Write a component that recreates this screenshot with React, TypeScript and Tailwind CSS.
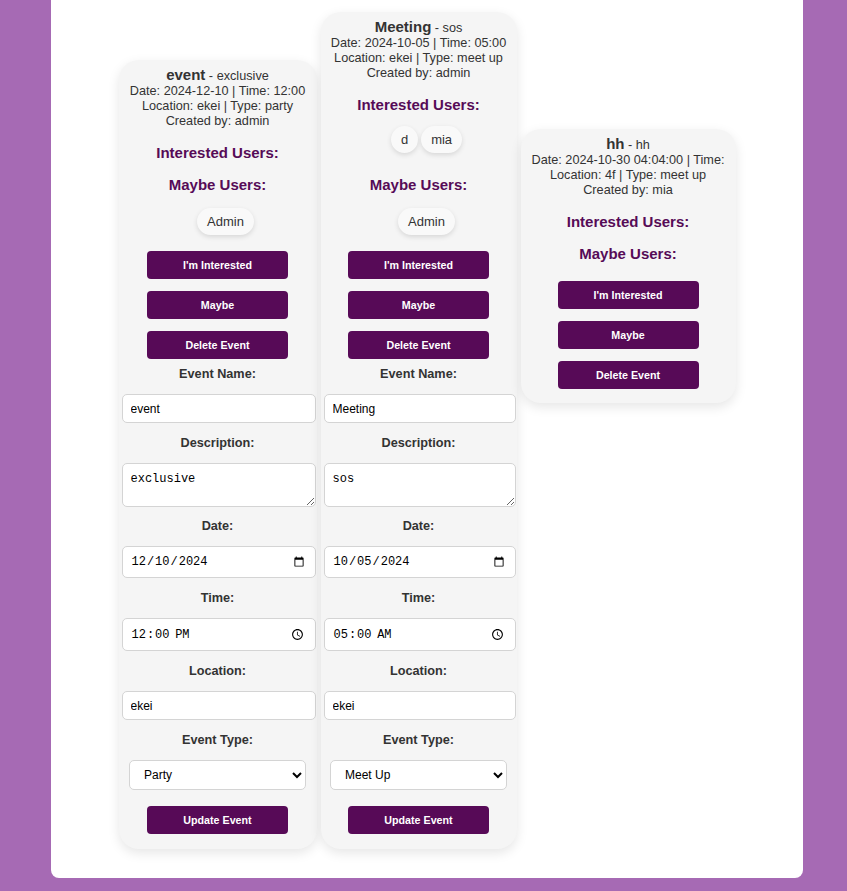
type EventItem = {
  name: string;
  description: string;
  dateLine: string;
  location: string;
  type: string;
  createdBy: string;
  interested: string[];
  maybe: string[];
  form?: {
    date: string;
    time: string;
    typeLabel: string;
  };
};

const events: EventItem[] = [
  {
    name: "event",
    description: "exclusive",
    dateLine: "Date: 2024-12-10 | Time: 12:00",
    location: "ekei",
    type: "party",
    createdBy: "admin",
    interested: [],
    maybe: ["Admin"],
    form: { date: "2024-12-10", time: "12:00", typeLabel: "Party" },
  },
  {
    name: "Meeting",
    description: "sos",
    dateLine: "Date: 2024-10-05 | Time: 05:00",
    location: "ekei",
    type: "meet up",
    createdBy: "admin",
    interested: ["d", "mia"],
    maybe: ["Admin"],
    form: { date: "2024-10-05", time: "05:00", typeLabel: "Meet Up" },
  },
  {
    name: "hh",
    description: "hh",
    dateLine: "Date: 2024-10-30 04:04:00 | Time:",
    location: "4f",
    type: "meet up",
    createdBy: "mia",
    interested: [],
    maybe: [],
  },
];

function Chip({ label }: { label: string }) {
  return (
    <li className="flex h-[27px] items-center rounded-full bg-[#f9f9f9] px-[10px] text-[13px] text-[#333] shadow-[0_2px_5px_rgba(0,0,0,0.12)]">
      {label}
    </li>
  );
}

function ActionButton({ children, className }: { children: string; className?: string }) {
  return (
    <button
      type="button"
      className={`h-[28px] w-[141px] rounded-[4px] bg-[#570a57] text-[10.7px] font-bold text-white ${className ?? ""}`}
    >
      {children}
    </button>
  );
}

function FieldLabel({ children }: { children: string }) {
  return (
    <label className="mt-[12px] mb-[12px] text-[12.7px] leading-[16px] font-bold text-[#333]">
      {children}
    </label>
  );
}

const inputClass =
  "self-stretch ml-[3px] mr-[1px] rounded-[5px] border border-[#d4d4d4] bg-white px-[8px] text-[12px] text-black outline-none";

function EventCard({ ev, className }: { ev: EventItem; className: string }) {
  return (
    <div
      className={`flex flex-col items-center rounded-[20px] bg-[#f5f5f5] px-[6px] pt-[7px] text-center shadow-[0_4px_12px_rgba(0,0,0,0.1)] ${className}`}
    >
      <div className="text-[12.7px] leading-[15px] text-[#333]">
        <div className="leading-[16px]">
          <span className="text-[15px] font-bold">{ev.name}</span> - {ev.description}
        </div>
        <div className="whitespace-nowrap">{ev.dateLine}</div>
        <div className="whitespace-nowrap">
          Location: {ev.location} | Type: {ev.type}
        </div>
        <div>Created by: {ev.createdBy}</div>
      </div>

      <h3 className="mt-[15px] text-[15px] leading-[18px] font-bold text-[#560b57]">
        Interested Users:
      </h3>
      {ev.interested.length > 0 && (
        <ul className="mt-[12px] mb-[9px] flex gap-[3px] pl-[16px]">
          {ev.interested.map((u) => (
            <Chip key={u} label={u} />
          ))}
        </ul>
      )}

      <h3 className="mt-[14px] text-[15px] leading-[18px] font-bold text-[#560b57]">
        Maybe Users:
      </h3>
      {ev.maybe.length > 0 && (
        <ul className="mt-[14px] flex gap-[3px] pl-[16px]">
          {ev.maybe.map((u) => (
            <Chip key={u} label={u} />
          ))}
        </ul>
      )}

      <div className={`flex flex-col items-center gap-[12px] ${ev.maybe.length > 0 ? "mt-[16px]" : "mt-[18px]"}`}>
        <ActionButton>I'm Interested</ActionButton>
        <ActionButton>Maybe</ActionButton>
        <ActionButton>Delete Event</ActionButton>
      </div>

      {ev.form && (
        <form className="flex flex-col items-center self-stretch -mx-[6px]">
          <label className="mt-[7px] mb-[12px] text-[12.7px] leading-[16px] font-bold text-[#333]">
            Event Name:
          </label>
          <input type="text" defaultValue={ev.name} className={`${inputClass} h-[29px]`} />

          <FieldLabel>Description:</FieldLabel>
          <textarea
            defaultValue={ev.description}
            className={`${inputClass} h-[44px] pt-[6px] font-['Liberation_Mono',monospace] text-[12px]`}
          />

          <label className="mt-[11px] mb-[12px] text-[12.7px] leading-[16px] font-bold text-[#333]">
            Date:
          </label>
          <input
            type="date"
            defaultValue={ev.form.date}
            className={`${inputClass} h-[32px] font-['Liberation_Mono',monospace]`}
          />

          <FieldLabel>Time:</FieldLabel>
          <input
            type="time"
            defaultValue={ev.form.time}
            className={`${inputClass} h-[33px] font-['Liberation_Mono',monospace]`}
          />

          <FieldLabel>Location:</FieldLabel>
          <input type="text" defaultValue={ev.location} className={`${inputClass} h-[29px]`} />

          <FieldLabel>Event Type:</FieldLabel>
          <select
            defaultValue={ev.form.typeLabel}
            className="h-[30px] w-[177px] rounded-[5px] border border-[#d4d4d4] bg-white px-[10px] text-[12px] text-black outline-none"
          >
            <option>Party</option>
            <option>Meet Up</option>
            <option>Workshop</option>
          </select>

          <ActionButton className="mt-[16px]">Update Event</ActionButton>
        </form>
      )}
      <div className={ev.form ? "h-[15px]" : "h-[14px]"} />
    </div>
  );
}

export default function App() {
  return (
    <div className="min-h-[891px] bg-[#a66ab4] pl-[51px] pr-[44px] pb-[14px] font-['Liberation_Sans',Arial,sans-serif]">
      <div className="flex items-start justify-center gap-[4px] rounded-b-[8px] bg-white pt-[12px] pb-[29px]">
        <EventCard ev={events[0]} className="mt-[48px] w-[198px]" />
        <EventCard ev={events[1]} className="w-[196px]" />
        <EventCard ev={events[2]} className="mt-[117px] w-[215px]" />
      </div>
    </div>
  );
}
